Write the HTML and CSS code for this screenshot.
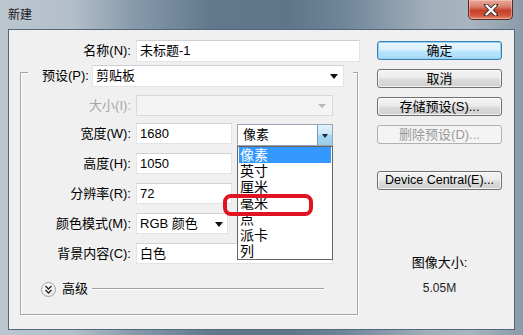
FILE: index.html
```html
<!DOCTYPE html>
<html lang="zh-CN">
  <head>
    <meta charset="UTF-8" />
    <title>新建</title>
    <link rel="stylesheet" href="styles.css">
  </head>
  <body>
    <div class="window">
      <div class="titlebar">
        <span class="title">新建</span>
        <div class="close">
          <svg width="14" height="12" viewBox="0 0 14 12">
            <path d="M2 1 L12 11 M12 1 L2 11" stroke="#3a2a2a" stroke-width="4" stroke-linecap="round" />
            <path d="M2.5 1.5 L11.5 10.5 M11.5 1.5 L2.5 10.5" stroke="#fff" stroke-width="2.4" stroke-linecap="round" />
          </svg>
        </div>
      </div>

      <div class="client">
        <div class="main">
          <div class="row">
            <span class="lbl lbl-name">名称(N):</span>
            <div class="field name-field">未标题-1</div>
          </div>

          <div class="group">
            <div class="preset-row">
              <span class="lbl-auto">预设(P):</span>
              <div class="field select preset-field">剪贴板<span class="arrow"></span></div>
            </div>

            <div class="row size-row">
              <span class="lbl disabled">大小(I):</span>
              <div class="field select off size-field"><span class="arrow light"></span></div>
            </div>

            <div class="row width-row">
              <span class="lbl">宽度(W):</span>
              <div class="field num-field">1680</div>
              <div class="unit">
                <div class="field unit-field">像素<span class="drop-btn"><span class="arrow small"></span></span></div>
                <ul class="unit-list">
                  <li class="on">像素</li>
                  <li>英寸</li>
                  <li>厘米</li>
                  <li>毫米</li>
                  <li>点</li>
                  <li>派卡</li>
                  <li>列</li>
                </ul>
                <div class="mark"></div>
              </div>
            </div>

            <div class="row">
              <span class="lbl">高度(H):</span>
              <div class="field num-field">1050</div>
            </div>

            <div class="row">
              <span class="lbl">分辨率(R):</span>
              <div class="field num-field">72</div>
            </div>

            <div class="row">
              <span class="lbl">颜色模式(M):</span>
              <div class="field select mode-field">RGB 颜色<span class="arrow"></span></div>
            </div>

            <div class="row">
              <span class="lbl">背景内容(C):</span>
              <div class="field bg-field">白色</div>
            </div>

            <div class="adv-row">
              <span class="adv-btn">
                <svg width="9" height="9" viewBox="0 0 9 9">
                  <path d="M1.5 1 L4.5 4 L7.5 1 M1.5 5 L4.5 8 L7.5 5" fill="none" stroke="#222" stroke-width="1.4" />
                </svg>
              </span>
              <span class="adv-text">高级</span>
              <span class="adv-line"></span>
            </div>
          </div>
        </div>

        <div class="side">
          <div class="btn default">确定</div>
          <div class="btn">取消</div>
          <div class="btn">存储预设(S)...</div>
          <div class="btn off">删除预设(D)...</div>
          <div class="btn dc">Device Central(E)...</div>
          <div class="size-title">图像大小:</div>
          <div class="size-value">5.05M</div>
        </div>
      </div>
    </div>
  </body>
</html>
```

FILE: styles.css
```css
* {
  margin: 0;
  padding: 0;
  box-sizing: border-box;
}
body {
  font-family: "Liberation Sans", "Noto Sans CJK SC", sans-serif;
  font-size: 13px;
  color: #000;
}
.window {
  width: 523px;
  height: 335px;
  display: flex;
  flex-direction: column;
  padding-bottom: 5px;
  background: linear-gradient(to right, #bcc6cf 0%, #b2bec9 14%, #8599aa 26%, #62798d 40%, #5e768a 55%, #70869a 66%, #a2afbb 82%, #a8b4bf 90%, #8a9bab 100%);
}
.titlebar {
  height: 29px;
  display: flex;
  justify-content: space-between;
  align-items: flex-start;
}
.title {
  margin: 7px 0 0 8px;
  font-size: 12px;
  line-height: 16px;
  color: #1a1a1a;
}
.close {
  width: 45px;
  height: 20px;
  margin-right: 10px;
  display: flex;
  align-items: center;
  justify-content: center;
  border: 1px solid #5b2a22;
  border-top: none;
  border-radius: 0 0 5px 5px;
  background: linear-gradient(to bottom, #e9a99a 0%, #d8806c 35%, #c4412c 55%, #d2533a 80%, #e08a6a 100%);
  box-shadow: inset 0 0 0 1px rgba(255, 210, 200, 0.5);
}
.client {
  flex: 1;
  margin: 0 8px;
  display: flex;
  background: #f0f0f0;
  border: 1px solid #53667a;
}
.main {
  width: 340px;
  margin-left: 11px;
  padding-top: 10px;
}
.row {
  display: flex;
  align-items: flex-start;
  gap: 5px;
  height: 21px;
}
.lbl {
  width: 110px;
  text-align: right;
  line-height: 21px;
  white-space: nowrap;
}
.lbl-name {
  width: 111px;
  line-height: 22px;
}
.disabled {
  color: #a7a7a7;
}
.field {
  position: relative;
  height: 21px;
  padding-left: 3px;
  line-height: 19px;
  background: #fff;
  border: 1px solid #e2e3e5;
  border-top-color: #cfd1d4;
  white-space: nowrap;
}
.name-field {
  width: 224px;
  height: 22px;
  line-height: 20px;
}
.group {
  height: 243px;
  margin-top: 11px;
  width: 338px;
  border: 1px solid #a5a5a5;
  box-shadow: 1px 1px 0 #fff, inset 1px 1px 0 #fff;
  display: flex;
  flex-direction: column;
}
.preset-row {
  display: flex;
  align-items: center;
  gap: 3px;
  height: 22px;
  margin: -8px 4px 0 7px;
  padding-left: 14px;
  background: #f0f0f0;
}
.lbl-auto {
  line-height: 22px;
}
.preset-field {
  width: 252px;
  height: 22px;
  line-height: 20px;
}
.arrow {
  position: absolute;
  top: 50%;
  margin-top: -2px;
  border-left: 4px solid transparent;
  border-right: 4px solid transparent;
  border-top: 5px solid #111;
}
.preset-field .arrow {
  right: 5px;
}
.mode-field .arrow {
  right: 4px;
}
.arrow.light {
  right: 6px;
  border-top-color: #b8b8b8;
  border-left-width: 4px;
  border-right-width: 4px;
  border-top-width: 4px;
}
.arrow.small {
  left: 4px;
  margin-top: -1px;
  border-left-width: 3px;
  border-right-width: 3px;
  border-top-width: 4px;
  border-top-color: #1d2a3a;
}
.off {
  background: #f4f4f4;
  border-color: #d9d9d9;
}
.size-row {
  margin-top: 8px;
}
.size-field {
  width: 197px;
}
.width-row {
  margin-top: 7px;
  position: relative;
  z-index: 2;
}
.row + .row {
  margin-top: 9px;
}
.size-row + .width-row {
  margin-top: 7px;
}
.num-field {
  width: 96px;
}
.mode-field {
  width: 92px;
}
.bg-field {
  width: 197px;
}
.unit {
  position: relative;
  width: 96px;
}
.unit-field {
  height: 22px;
  margin-top: 1px;
  padding-left: 5px;
  line-height: 20px;
  border-color: #9aa6b4;
}
.drop-btn {
  position: absolute;
  top: 0;
  right: 0;
  width: 15px;
  height: 20px;
  border-left: 1px solid #6e9fc9;
  background: linear-gradient(to bottom, #e4f3fc 0%, #c3e5f8 48%, #a4d6f3 52%, #9bcdea 100%);
}
.unit-list {
  list-style: none;
  position: absolute;
  top: 100%;
  left: 0;
  width: 96px;
  height: 114px;
  padding: 0 1px;
  background: #fff;
  border: 1px solid #646464;
}
.unit-list li {
  height: 16px;
  padding-left: 1px;
  line-height: 16px;
  font-size: 14px;
}
.unit-list li.on {
  background: #3399ff;
  color: #fff;
}
.mark {
  position: absolute;
  left: -14px;
  top: 71px;
  width: 90px;
  height: 22px;
  border: 4px solid #e01323;
  border-radius: 8px;
}
.adv-row {
  display: flex;
  align-items: center;
  height: 16px;
  margin: 17px 33px 0 20px;
}
.adv-btn {
  width: 15px;
  height: 15px;
  display: flex;
  align-items: center;
  justify-content: center;
  border: 1px solid #a3a3a3;
  border-radius: 50%;
  background: radial-gradient(circle at 40% 35%, #ffffff 0%, #f3f3f3 55%, #d9d9d9 100%);
}
.adv-text {
  margin-left: 6px;
  line-height: 16px;
}
.adv-line {
  flex: 1;
  margin-left: 4px;
  height: 2px;
  border-top: 1px solid #a0a0a0;
  border-bottom: 1px solid #fff;
}
.side {
  width: 125px;
  margin-left: 17px;
  padding-top: 11px;
  display: flex;
  flex-direction: column;
  gap: 9px;
}
.btn {
  height: 19px;
  line-height: 17px;
  text-align: center;
  white-space: nowrap;
  border: 1px solid #707070;
  border-radius: 3px;
  background: linear-gradient(to bottom, #f3f3f3 0%, #ebebeb 48%, #dddddd 52%, #cfcfcf 100%);
  box-shadow: inset 0 0 0 1px rgba(255, 255, 255, 0.7);
}
.btn.default {
  border-color: #3c7fb1;
  background: linear-gradient(to bottom, #eaf6fd 0%, #d9f0fc 48%, #bee6fd 52%, #a7d9f5 100%);
  box-shadow: inset 0 0 0 1px #8fd3f5;
}
.btn.off {
  color: #9a9a9a;
  border-color: #adb2b5;
  background: #f4f4f4;
  box-shadow: none;
}
.btn.dc {
  margin-top: 18px;
  font-size: 12.5px;
}
.size-title {
  margin-top: 56px;
  text-align: center;
  line-height: 16px;
}
.size-value {
  margin-top: 0;
  text-align: center;
  line-height: 16px;
  font-size: 12px;
  color: #222;
}
```
